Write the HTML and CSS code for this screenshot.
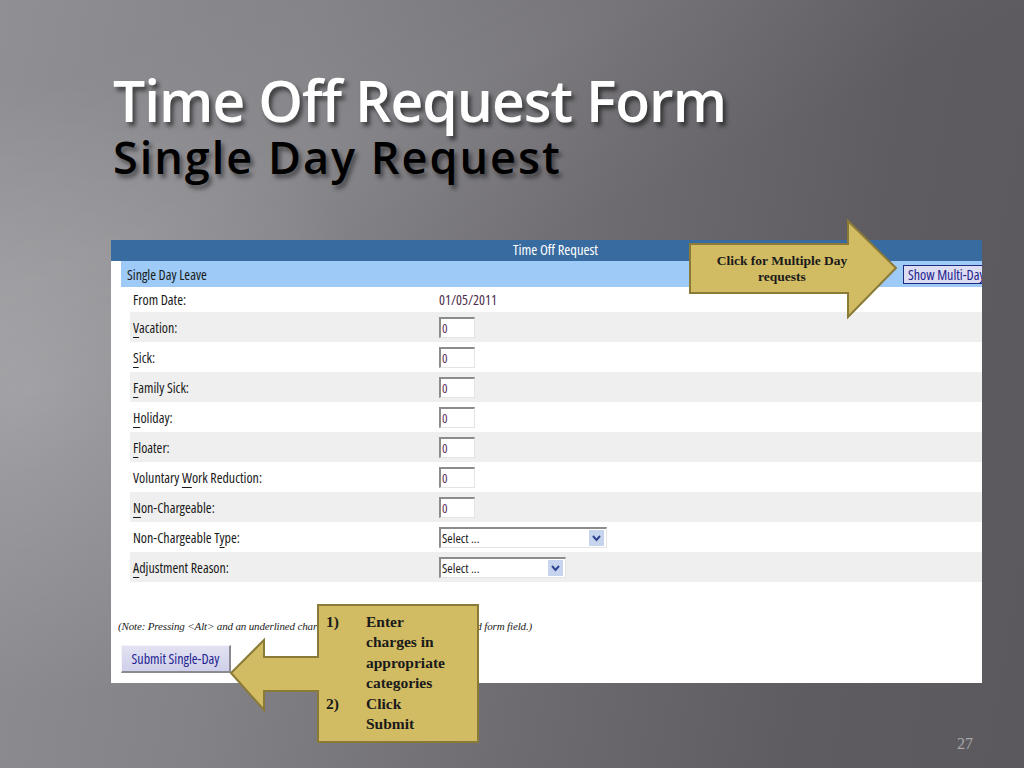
FILE: index.html
```html
<!DOCTYPE html>
<html>
<head>
<meta charset="utf-8">
<title>Time Off Request Form</title>
<link rel="stylesheet" href="styles.css">
</head>
<body>
<div class="slide">
  <h1 class="title">Time Off Request Form</h1>
  <h2 class="subtitle">Single Day Request</h2>

  <div class="panel">
    <div class="hdr">Time Off Request</div>
    <div class="sect"><span>Single Day Leave</span><span class="multi">Show Multi-Day</span></div>
    <div class="rows">
      <div class="row first"><span class="lbl">From Date:</span><span class="date">01/05/2011</span></div>
      <div class="row alt"><span class="lbl"><u>V</u>acation:</span><span class="inp">0</span></div>
      <div class="row"><span class="lbl"><u>S</u>ick:</span><span class="inp">0</span></div>
      <div class="row alt"><span class="lbl"><u>F</u>amily Sick:</span><span class="inp">0</span></div>
      <div class="row"><span class="lbl"><u>H</u>oliday:</span><span class="inp">0</span></div>
      <div class="row alt"><span class="lbl"><u>F</u>loater:</span><span class="inp">0</span></div>
      <div class="row"><span class="lbl">Voluntary <u>W</u>ork Reduction:</span><span class="inp">0</span></div>
      <div class="row alt"><span class="lbl"><u>N</u>on-Chargeable:</span><span class="inp">0</span></div>
      <div class="row"><span class="lbl">Non-Chargeable T<u>y</u>pe:</span><span class="sel wide"><span class="seltxt">Select ...</span><svg class="selbtn" width="15" height="16" viewBox="0 0 15 16"><rect x="0" y="0" width="15" height="16" fill="#c6d4ee"/><path d="M4 6 L7.5 10 L11 6" stroke="#2f4594" stroke-width="2" fill="none"/></svg></span></div>
      <div class="row alt"><span class="lbl"><u>A</u>djustment Reason:</span><span class="sel narrow"><span class="seltxt">Select ...</span><svg class="selbtn" width="15" height="16" viewBox="0 0 15 16"><rect x="0" y="0" width="15" height="16" fill="#c6d4ee"/><path d="M4 6 L7.5 10 L11 6" stroke="#2f4594" stroke-width="2" fill="none"/></svg></span></div>
    </div>
    <p class="note">(Note: Pressing &lt;Alt&gt; and an underlined character will move focus to the associated form field.)</p>
    <div class="submit">Submit Single-Day</div>
  </div>

  <div class="pgnum">27</div>

  <svg class="arrows" width="1024" height="768" viewBox="0 0 1024 768">
    <polygon points="690,244 848,244 848,221 896,268 848,317 848,293 690,293" fill="#d1bb63" stroke="#8a7a38" stroke-width="2" stroke-linejoin="miter"/>
    <polygon points="318,605 478,605 478,742 318,742 318,691 264,691 264,710 231,673 264,640 264,657 318,657" fill="#d1bb63" stroke="#8a7a38" stroke-width="2" stroke-linejoin="miter"/>
  </svg>
  <div class="ct-text">Click for Multiple Day<br>requests</div>
  <div class="cb-text">
    <span>1)</span><span>Enter<br>charges in<br>appropriate<br>categories</span>
    <span>2)</span><span>Click<br>Submit</span>
  </div>
</div>
</body>
</html>
```

FILE: styles.css
```css
html, body {
  margin: 0;
  padding: 0;
}
body {
  width: 1024px;
  height: 768px;
  overflow: hidden;
}
.slide {
  position: relative;
  width: 1024px;
  height: 768px;
  overflow: hidden;
  box-sizing: border-box;
  padding-top: 70px;
  background:
    radial-gradient(ellipse 520px 430px at 30px 390px, rgba(255,255,255,0.17), rgba(255,255,255,0) 72%),
    linear-gradient(155deg, rgba(255,255,255,0) 8%, rgba(255,255,255,0.05) 24%, rgba(255,255,255,0) 40%),
    linear-gradient(100deg, #908f94 0%, #838287 28%, #6e6c71 55%, #5e5c61 80%, #5b595e 100%);
  font-family: "Open Sans", "Liberation Sans", sans-serif;
}
.title {
  margin: 0 0 0 113px;
  font-weight: 600;
  font-size: 57px;
  line-height: 60px;
  color: #ffffff;
  letter-spacing: -1px;
  text-shadow: 3px 4px 4px rgba(0,0,0,0.55);
}
.subtitle {
  margin: 4px 0 0 113px;
  font-weight: 600;
  font-size: 45px;
  line-height: 46px;
  color: #000000;
  letter-spacing: 2px;
  text-shadow: 3px 4px 4px rgba(0,0,0,0.45);
}
.panel {
  margin: 60px 0 0 111px;
  width: 871px;
  height: 443px;
  background: #ffffff;
  overflow: hidden;
  font-stretch: 75%;
  font-size: 14px;
  color: #1a1a1a;
}
.hdr {
  height: 21px;
  line-height: 20px;
  background: #386b9f;
  color: #ffffff;
  text-align: center;
  padding-left: 18px;
  font-size: 14.5px;
}
.sect {
  margin-left: 10px;
  height: 26px;
  background: #9dcaf6;
  display: flex;
  align-items: center;
  padding-left: 6px;
}
.multi {
  margin-left: auto;
  margin-right: -21px;
  box-sizing: border-box;
  width: 100px;
  height: 19px;
  line-height: 17px;
  padding-left: 4px;
  white-space: nowrap;
  border: 1px solid #1d2a80;
  background: #dcdcf2;
  color: #22228c;
}
.rows {
  margin-left: 19px;
}
.row {
  height: 30px;
  display: grid;
  grid-template-columns: 309px 1fr;
  align-items: center;
}
.row.first {
  height: 25px;
}
.row.alt {
  background: #efefef;
}
.lbl {
  padding-left: 3px;
}
.lbl u {
  text-underline-offset: 4px;
  text-decoration-thickness: 1px;
}
.date {
  color: #4d2c4d;
}
.inp {
  box-sizing: border-box;
  width: 36px;
  height: 21px;
  background: #ffffff;
  border-top: 2px solid #8c8c8c;
  border-left: 2px solid #8c8c8c;
  border-right: 1px solid #e4e4e4;
  border-bottom: 1px solid #e4e4e4;
  color: #5a2f5a;
  font-size: 13px;
  line-height: 18px;
  padding-left: 1px;
}
.sel {
  box-sizing: border-box;
  height: 21px;
  display: flex;
  align-items: center;
  justify-content: space-between;
  background: #ffffff;
  border-top: 2px solid #8c8c8c;
  border-left: 2px solid #8c8c8c;
  border-right: 1px solid #e4e4e4;
  border-bottom: 1px solid #e4e4e4;
  padding: 0 2px 0 1px;
  font-size: 13px;
  color: #1a1a1a;
}
.sel.wide {
  width: 168px;
}
.sel.narrow {
  width: 127px;
}
.selbtn {
  display: block;
}
.note {
  margin: 37px 0 0 7px;
  font-family: "Liberation Serif", "Times New Roman", serif;
  font-stretch: normal;
  font-style: italic;
  font-size: 11px;
  line-height: 14px;
  letter-spacing: -0.15px;
  color: #222222;
  white-space: nowrap;
}
.submit {
  margin: 12px 0 0 10px;
  box-sizing: border-box;
  width: 110px;
  height: 28px;
  line-height: 25px;
  text-align: center;
  white-space: nowrap;
  background: linear-gradient(#e2e2f2, #cfd0ea);
  border-top: 1px solid #f4f4fa;
  border-left: 1px solid #f4f4fa;
  border-right: 2px solid #8a8a90;
  border-bottom: 2px solid #8a8a90;
  color: #1f2490;
}
.pgnum {
  margin: 53px 51px 0 0;
  text-align: right;
  font-family: "Liberation Serif", "Times New Roman", serif;
  font-size: 16px;
  line-height: 16px;
  color: #a8a8aa;
}
.arrows {
  position: absolute;
  left: 0;
  top: 0;
  pointer-events: none;
}
.ct-text {
  position: absolute;
  left: 691px;
  top: 253px;
  width: 182px;
  text-align: center;
  font-family: "Liberation Serif", "Times New Roman", serif;
  font-weight: bold;
  font-size: 13.5px;
  line-height: 16px;
  color: #1a1a1a;
}
.cb-text {
  position: absolute;
  left: 326px;
  top: 612px;
  display: grid;
  grid-template-columns: 40px auto;
  white-space: nowrap;
  font-family: "Liberation Serif", "Times New Roman", serif;
  font-weight: bold;
  font-size: 15.5px;
  line-height: 20.4px;
  color: #1a1a1a;
}
```
